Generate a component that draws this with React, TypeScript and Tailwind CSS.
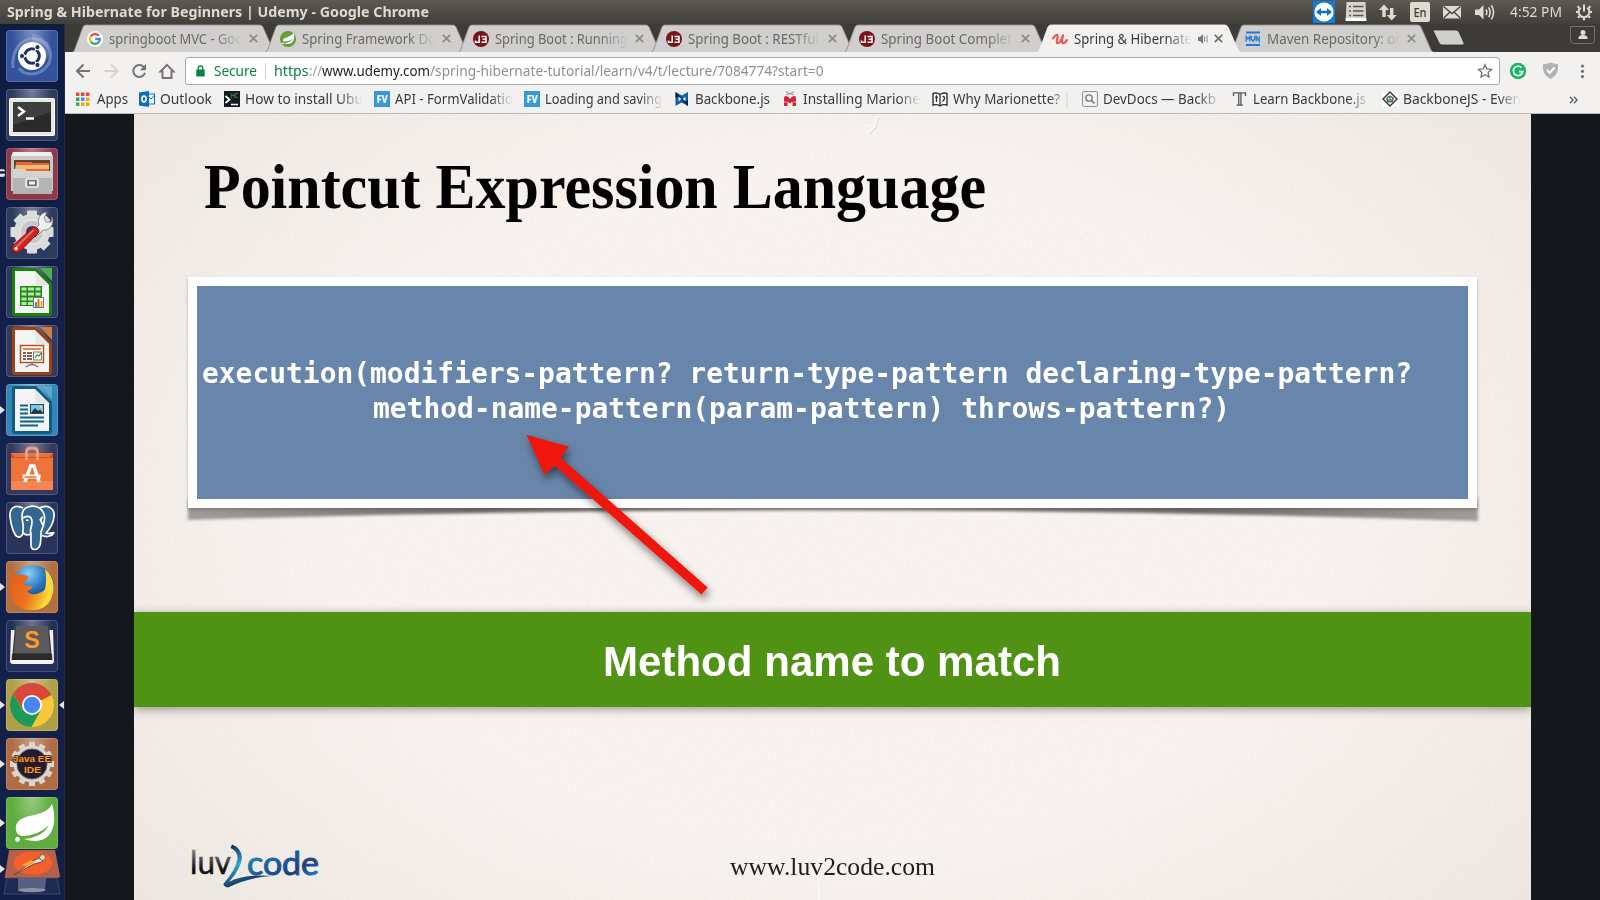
import { useLayoutEffect, useRef } from "react";
import type { ReactNode } from "react";

/* Text squeezed or stretched horizontally to an exact width. */
function Fit({ w, className = "", children }: { w: number; className?: string; children: ReactNode }) {
  const ref = useRef<HTMLSpanElement>(null);
  useLayoutEffect(() => {
    const el = ref.current;
    if (!el) return;
    el.style.transform = "none";
    const natural = el.getBoundingClientRect().width;
    if (natural > 0) el.style.transform = `scaleX(${w / natural})`;
  }, [w]);
  return (
    <span className="block shrink-0" style={{ width: w }}>
      <span ref={ref} className={`inline-block origin-left whitespace-pre align-top ${className}`}>
        {children}
      </span>
    </span>
  );
}

/* ---------- system bar ---------- */

function SystemBar() {
  return (
    <header className="flex h-6 w-full items-center bg-linear-to-b from-[#5d5a50] to-[#403f3a] pl-[7px] text-[#dfdbd2]">
      <div className="-mt-px">
        <Fit w={422} className="text-[14px] leading-[24px] font-bold">
          Spring &amp; Hibernate for Beginners | Udemy - Google Chrome
        </Fit>
      </div>
      <svg className="ml-auto h-6 w-[184px]" viewBox="1312 0 184 24">
        <rect x="1313" y="1" width="22" height="22" fill="#0e7fe0" />
        <circle cx="1324" cy="12" r="9.6" fill="#fff" />
        <path d="M1316 12l5-4v2.8h6V8l5 4-5 4v-2.8h-6V16z" fill="#0e73d0" />
        <path d="M1346.500 2h19l.8 19h-20.6z" fill="#d6d4d0" />
        <path d="M1345.700 18h20.600v3h-20.600z" fill="#fff" />
        <path d="M1349 6.500h2M1353 6.500h10.500M1349 11h2M1353 11h10.500M1349 15.500h2M1353 15.500h10.500" stroke="#55534e" strokeWidth="1.700" />
        <path d="M1384 4.500l5 5.500h-3.300v7h-3.400v-7h-3.300zM1391.700 20.500l5-5.500h-3.300V8h-3.400v7h-3.300z" fill="#dfdbd2" />
        <rect x="1410" y="2" width="20" height="20" rx="2" fill="#dfdbd2" />
        <text x="1413.500" y="17" fontSize="12.500" fontWeight="500" fill="#3c3b37" textLength="13" lengthAdjust="spacingAndGlyphs">En</text>
        <path d="M1443 6h18v12.500h-18z" fill="#dfdbd2" />
        <path d="M1443.500 6.500l8.500 7 8.500-7M1443.500 18.200l6.300-6M1460.500 18.200l-6.300-6" fill="none" stroke="#45443f" strokeWidth="1.400" />
        <path d="M1475 9.500h4l4.500-4.500v14.500l-4.500-4.500h-4z" fill="#dfdbd2" />
        <path d="M1486 9.500q1.600 2.700 0 5.500M1488.600 7.300q3 5 0 9.900M1491.300 5.200q4.600 7 0 14" fill="none" stroke="#dfdbd2" strokeWidth="1.600" />
      </svg>
      <div className="ml-[14px]">
        <Fit w={52} className="text-[14px] leading-[24px]">4:52 PM</Fit>
      </div>
      <svg className="mr-[7px] ml-[13px] h-[18px] w-[18px]" viewBox="0 0 18 18" fill="none" stroke="#dfdbd2">
        <path d="M5.600 4.600a5.400 5.400 0 1 0 6.800 0" strokeWidth="2" />
        <path d="M9 1.500v7" strokeWidth="2" />
        <path d="M4 4.600L2.600 3.200M14 4.600l1.400-1.400M3.200 9H1M17 9h-2.200M4.600 13.200l-1.600 1.600M13.400 13.200l1.600 1.600M9 15v2.300" strokeWidth="2.200" />
      </svg>
    </header>
  );
}

/* ---------- launcher ---------- */

function Dash() {
  return (
    <svg viewBox="0 0 52 52" className="h-[52px] w-[52px]">
      <path d="M7 38C5 20 16 7 30 9c10 2 15 10 14 17M40 12c8 12 5 24-6 30-8 4-17 2-21-4" fill="none" stroke="#a9bbdc" strokeOpacity=".45" strokeWidth="3" />
      <path d="M26 4c14 0 19 14 16 24L26 26z" fill="#fff" opacity=".16" />
      <circle cx="26" cy="26" r="14" fill="#fff" />
      <circle cx="26" cy="26" r="7.300" fill="none" stroke="#20325f" strokeWidth="3" />
      <path d="M26 26L14 26M26 26l6-10.500M26 26l6 10.500" stroke="#fff" strokeWidth="1.300" />
      <circle cx="26" cy="26" r="5.400" fill="#fff" />
      <g fill="#20325f" stroke="#fff" strokeWidth="1">
        <circle cx="16" cy="26" r="2.600" />
        <circle cx="31.500" cy="17.200" r="2.600" />
        <circle cx="31.500" cy="35" r="2.600" />
      </g>
    </svg>
  );
}

function Terminal() {
  return (
    <svg viewBox="0 0 52 52" className="h-[52px] w-[52px]">
      <rect x="3.500" y="9.500" width="45" height="37" rx="1" fill="#e8e8e8" stroke="#fff" />
      <rect x="7" y="13" width="38" height="30" fill="#2a2a2a" />
      <path d="M7 13h38v10L7 36z" fill="#4c4c4c" opacity=".6" />
      <path d="M12 18l6 4.500-6 4.500M20 29.500h8" fill="none" stroke="#fff" strokeWidth="2.400" />
    </svg>
  );
}

function Files() {
  return (
    <svg viewBox="0 0 52 52" className="h-[52px] w-[52px]">
      <path d="M7 4h38l2 5v34H5V9z" fill="#c9c9c9" />
      <path d="M7 4h38l1.500 4h-41z" fill="#ededed" />
      <rect x="8" y="12" width="36" height="12" fill="#5c4430" />
      <path d="M10 14h15l2 1h16v9H9z" fill="#e2692e" />
      <path d="M10 17h33v4H9z" fill="#f4b77a" />
      <path d="M7 21h12l2 2h25v23H7z" fill="#b4b4b4" />
      <path d="M7 21h12l2 2h25v7H7z" fill="#d2d2d2" />
      <rect x="20" y="31" width="12" height="8" rx="1" fill="#8d8d8d" stroke="#eee" strokeWidth="1.700" />
      <rect x="22.500" y="33" width="7" height="4" fill="#f4f4f4" stroke="#555" strokeWidth=".8" />
    </svg>
  );
}

function Settings() {
  return (
    <svg viewBox="0 0 52 52" className="h-[52px] w-[52px]">
      <g fill="#dcdcdc">
        <circle cx="26" cy="25" r="18" />
        {[0, 45, 90, 135].map((a) => (
          <rect key={a} x="21" y="3.500" width="10" height="43" rx="1" transform={`rotate(${a} 26 25)`} />
        ))}
      </g>
      <circle cx="26" cy="25" r="12" fill="#c9c9c9" stroke="#eee" />
      <circle cx="26" cy="25" r="6" fill="#2d3c63" />
      <path d="M28 23l5-5c-2-6 1-12 8-13l-3 6 2 4 5 0 1-5c3 7-2 14-9 13l-5 5z" fill="#efefef" stroke="#777" strokeWidth=".8" />
      <path d="M27.500 20q5 0 5.500 5L14 44.500c-4.500 3.500-10-1.500-7-6z" fill="#cf2320" stroke="#8b0f0d" />
      <path d="M27.500 23L10.500 40" stroke="#ef6a60" strokeWidth="1.800" />
      <circle cx="10" cy="41.500" r="1.700" fill="#fff" />
    </svg>
  );
}

function OfficePage({ dark, fold, children }: { dark: string; fold: string; children: ReactNode }) {
  return (
    <svg viewBox="0 0 52 52" className="h-[52px] w-[52px]">
      <path d="M8 2h22l16 16v29q0 3-3 3H9q-3 0-3-3V4q0-2 2-2z" fill={dark} />
      <path d="M34 2h12v13z" fill={fold} />
      <path d="M9 5h20l14 14v28H9z" fill="#f4f4f4" />
      <path d="M29 5l14 14H30z" fill="#dcdcdc" opacity=".6" />
      {children}
    </svg>
  );
}

function Calc() {
  return (
    <OfficePage dark="#18830c" fold="#4bb544">
      <rect x="14" y="20" width="22" height="20" fill="#1d8a12" />
      <path d="M15.500 21.500h5v3h-5zM22 21.500h6v3h-6zM29.500 21.500h5v3h-5zM15.500 26.500h5v3h-5zM22 26.500h6v3h-6zM29.500 26.500h5v3h-5zM15.500 31.500h5v3h-5zM22 31.500h6v3h-6zM15.500 36h5v3h-5zM22 36h6v3h-6z" fill="#b5e8a8" />
      <rect x="27.500" y="31.500" width="10" height="10" fill="#fff" stroke="#777" />
      <path d="M29 36h2v5h-2z" fill="#4a90c8" />
      <path d="M31.500 33h2v8h-2z" fill="#e06a1c" />
      <path d="M34.500 35h2v6h-2z" fill="#f0b400" />
    </OfficePage>
  );
}

function Impress() {
  return (
    <OfficePage dark="#9a4216" fold="#d17a48">
      <rect x="14.500" y="20.500" width="23" height="17" fill="#fff" stroke="#b5511c" strokeWidth="1.500" />
      <path d="M17 24h18" stroke="#e08a4a" strokeWidth="2" />
      <path d="M17 28h3M17 31h3M17 34h3M21 28h5M21 31h5M21 34h5" stroke="#6b2a10" strokeWidth="1.700" />
      <rect x="27.500" y="27" width="8" height="8" fill="#fff" stroke="#777" />
      <path d="M29 33l2-3 2 1 2-3" fill="none" stroke="#1c9a2a" strokeWidth="1.300" />
      <path d="M26 38v2M20 42q6-5 12 0" fill="none" stroke="#777" strokeWidth="1.500" />
    </OfficePage>
  );
}

function Writer() {
  return (
    <OfficePage dark="#0d5b87" fold="#5aa7cf">
      <path d="M14 21.500h8M14 25.500h8M14 29.500h8M14 33.500h24M14 37.500h24M14 41.500h18" stroke="#0f5f8f" strokeWidth="1.900" />
      <rect x="24.500" y="20.500" width="13" height="9" fill="#7cc3ea" stroke="#174c6c" />
      <path d="M25 29l4-5 3 3 2-1.500 3 3.500z" fill="#333" />
      <circle cx="35" cy="23" r="1.200" fill="#ffd633" />
    </OfficePage>
  );
}

function Software() {
  return (
    <svg viewBox="0 0 52 52" className="h-[52px] w-[52px]">
      <path d="M5 10h42v37H5z" fill="#f0743a" />
      <path d="M5 10l4 4h34l4-4v5H5z" fill="#c9501f" />
      <path d="M5 38h42v9H5z" fill="#f4864f" />
      <path d="M20.500 17V9q0-4 5.500-4t5.500 4v8" fill="none" stroke="#f2a083" strokeWidth="2.800" />
      <path d="M19 39l5.500-16h3.500L33 39" fill="none" stroke="#fff" strokeWidth="3.400" />
      <path d="M16.500 33.500h18" stroke="#fff" strokeWidth="4" />
      <path d="M18.500 34h12" stroke="#e96a30" strokeWidth="1.400" />
    </svg>
  );
}

function Postgres() {
  return (
    <svg viewBox="0 0 52 52" className="h-[52px] w-[52px]" stroke="#fff" strokeWidth="1.700" strokeLinejoin="round" fill="#336791">
      <path d="M17 6C9 2 3 6 4 15c1 8 4 19 8 20 3 1 5-3 6-6" />
      <path d="M33 6c9-4 16 0 15 9-1 7-5 13-8 16 3 1 6 0 8-.5-2 4-8 5-12 3" />
      <path d="M22 5c5-2 13-1 16 7 2 6-1 13-3 18 0 6 0 10-1 13-2 6-9 6-9 0V32c-5 2-9 0-8-4 1-5-1-9-1-13 0-6 2-9 6-10z" />
      <path d="M17 16c4-3 9-2 9 4s-3 7-1 12M37 15c-4 1-2 6 1 9" fill="none" />
      <path d="M20 18l2.500.5M33.500 18l2-.5" />
    </svg>
  );
}

function Firefox() {
  return (
    <svg viewBox="0 0 52 52" className="h-[52px] w-[52px]">
      <defs>
        <radialGradient id="ffglobe" cx=".4" cy=".2" r=".8"><stop offset="0" stopColor="#8ad4f5" /><stop offset=".5" stopColor="#2470b8" /><stop offset="1" stopColor="#0b2a66" /></radialGradient>
        <linearGradient id="fffox" x1="0" y1="0" x2="1" y2=".4"><stop offset="0" stopColor="#e05a18" /><stop offset=".6" stopColor="#ee7420" /><stop offset="1" stopColor="#f8d030" /></linearGradient>
      </defs>
      <circle cx="27" cy="25" r="21" fill="url(#ffglobe)" />
      <path d="M9 9c0 4 2 6 6 5 4-1 5 1 8 2l-5 6c0 3 4 3 7 3 3 1 0 4-4 5 3 4 8 4 12 2 7-2 9-7 9-13 3 5 4 14 3 19-3 7-10 11-18 11C11 50 3 38 4 26c0-7 2-12 5-17z" fill="url(#fffox)" />
      <path d="M39 8c10 8 11 22 5 31-3 5-7 8-12 9 7-6 10-12 9-18l-4 6c3-9 4-18 2-28z" fill="#fbd93c" />
    </svg>
  );
}

function Sublime() {
  return (
    <svg viewBox="0 0 52 52" className="h-[52px] w-[52px]">
      <path d="M5 10h42l1 31q0 3-3 3H7q-3 0-3-3z" fill="#f3f3f3" />
      <path d="M9 6h34l3 33H6z" fill="#3b3b3b" />
      <path d="M10 6h32l2 27H8z" fill="#5b5b5b" />
      <path d="M6 34h40l.4 6H5.600z" fill="#2b2b2b" />
      <text x="26" y="28" textAnchor="middle" fontSize="23" fontWeight="700" fill="#ff9a2e" className="font-['Liberation_Sans']">S</text>
    </svg>
  );
}

function Chrome() {
  return (
    <svg viewBox="0 0 52 52" className="h-[52px] w-[52px]">
      <circle cx="26" cy="26" r="22" fill="#f9c83a" />
      <path d="M26 26L6.900 15.100A22 22 0 0 1 45.600 16z" fill="#d9473a" />
      <path d="M26 16h19.600A22 22 0 0 0 6.900 15.100L16.500 30z" fill="#d9473a" />
      <path d="M6.900 15.100A22 22 0 0 0 25.500 48l9.200-16.500L17 31z" fill="#1d9a57" />
      <circle cx="26" cy="26" r="10" fill="#fff" />
      <circle cx="26" cy="26" r="8.200" fill="#4487f0" />
    </svg>
  );
}

function Eclipse() {
  return (
    <svg viewBox="0 0 52 52" className="h-[52px] w-[52px]">
      <g fill="#d9d5d0">
        {[0, 30, 60, 90, 120, 150].map((a) => (
          <rect key={a} x="23" y="4" width="6" height="44" transform={`rotate(${a} 26 26)`} />
        ))}
        <circle cx="26" cy="26" r="18.500" />
      </g>
      <circle cx="26" cy="26" r="15" fill="#221c33" stroke="#555" />
      <g fill="#f19a35" stroke="#3a1c06" strokeWidth="1.600" paintOrder="stroke" fontSize="9" fontWeight="700" textAnchor="middle" className="font-['Liberation_Sans']">
        <text x="26" y="23.500" textLength="38" lengthAdjust="spacingAndGlyphs">Java EE</text>
        <text x="26.500" y="34.500" textLength="17" lengthAdjust="spacingAndGlyphs">IDE</text>
      </g>
    </svg>
  );
}

function Spring() {
  return (
    <svg viewBox="0 0 52 52" className="h-[52px] w-[52px]">
      <path d="M46 7c5 15 3 36-16 37-5 0-9-1-12-2 12-1 21-6 25-14-7 7-17 11-27 11-5-1-7-5-6-10 3-14 29-7 36-22z" fill="#fff" />
      <circle cx="11.500" cy="42.500" r="2.400" fill="#fff" />
    </svg>
  );
}

const launcher: { bg: string; icon: ReactNode; left?: number; right?: boolean }[] = [
  { bg: "bg-[#34539d]", icon: <Dash /> },
  { bg: "bg-[#2c3a5f]", icon: <Terminal /> },
  { bg: "bg-[#8c3a48]", icon: <Files />, left: 2 },
  { bg: "bg-[#2c3a5f]", icon: <Settings /> },
  { bg: "bg-[#2c3a5f]", icon: <Calc /> },
  { bg: "bg-[#333a5c]", icon: <Impress /> },
  { bg: "bg-[#3487b4]", icon: <Writer />, left: 1 },
  { bg: "bg-[#34395d]", icon: <Software /> },
  { bg: "bg-[#2a345a]", icon: <Postgres /> },
  { bg: "bg-[#b3703f]", icon: <Firefox />, left: 1 },
  { bg: "bg-[#232f59]", icon: <Sublime /> },
  { bg: "bg-[#ada046]", icon: <Chrome />, left: 1, right: true },
  { bg: "bg-[#b06c42]", icon: <Eclipse />, left: 1 },
  { bg: "bg-[#5fad3e]", icon: <Spring />, left: 1 },
];

function Launcher() {
  return (
    <aside className="flex w-[65px] shrink-0 flex-col gap-[7px] border-r border-[#2b2d33] bg-linear-to-b from-[#0e1c40] via-[#14224e] to-[#141f45] pt-[6px]">
      {launcher.map((item, i) => (
        <div key={i} className="relative flex h-[52px] shrink-0 pl-[6px]">
          <div className={`relative h-[52px] w-[52px] overflow-hidden rounded-[4px] shadow-[inset_0_0_0_1px_rgba(255,255,255,0.16)] ${item.bg}`}>
            <div className="absolute inset-0 bg-radial-[at_50%_0%] from-white/35 to-transparent to-55%" />
            <div className="relative">{item.icon}</div>
          </div>
          {item.left === 1 && <svg className="absolute top-[21px] left-0 h-[10px] w-[5px]" viewBox="0 0 5 10"><path d="M0 1l5 4-5 4z" fill="#e4e4e4" /></svg>}
          {item.left === 2 && <svg className="absolute top-[20px] left-0 h-[10px] w-[5px]" viewBox="0 0 5 10"><path d="M0 1.500h4l1 1.500H0zM0 6h5l-1 2.500H0z" fill="#e4e4e4" stroke="#e4e4e4" strokeWidth=".6" /></svg>}
          {item.right && <svg className="absolute top-[21px] right-0 h-[10px] w-[5px]" viewBox="0 0 5 10"><path d="M5 1L0 5l5 4z" fill="#e4e4e4" /></svg>}
        </div>
      ))}
      <svg viewBox="0 0 64 48" className="-mt-[6px] h-[48px] w-[64px] shrink-0">
        <path d="M0 15l5 4-5 4z" fill="#e4e4e4" />
        <path d="M9 0h46l5 26q0 2-2 2H6q-2 0-1-2z" fill="#b5604a" />
        <ellipse cx="33" cy="13" rx="19.500" ry="11.500" fill="#f4602a" />
        <path d="M14 25L33 11l8-4 4-1-3 6-8 2z" fill="#e8e2da" stroke="#6a4a3a" strokeWidth="1" />
        <circle cx="42.500" cy="7.500" r="3" fill="#d9d3cc" stroke="#6a4a3a" strokeWidth=".8" />
        <path d="M22 15l9-5 4 2-8 5z" fill="#f6a13a" />
        <path d="M7 28h50l3 16H4z" fill="#1e2a50" stroke="#40507a" strokeWidth=".8" />
        <path d="M18 28h28l-1 13q-13 3-27 0z" fill="#56617f" />
        <ellipse cx="32" cy="40" rx="13.500" ry="2" fill="#8b93a8" />
      </svg>
    </aside>
  );
}

/* ---------- tabs ---------- */

function FavJB() {
  return (
    <svg viewBox="0 0 16 16" className="h-4 w-4">
      <circle cx="8" cy="8" r="8" fill="#7b1215" />
      <path d="M2.500 9.500v1.800H6.200V4.500M8.500 5.400h4.500v5.900H8.500M9.500 8.300h3.500" fill="none" stroke="#fff" strokeWidth="1.500" />
    </svg>
  );
}

const favGoogle = (
  <svg viewBox="0 0 16 16" className="h-4 w-4">
    <circle cx="8" cy="8" r="8" fill="#fff" />
    <g fill="none" strokeWidth="2.300">
      <path d="M11.700 4.700A5 5 0 0 0 3.700 5.500" stroke="#ea4335" />
      <path d="M3.700 5.500a5 5 0 0 0 0 5" stroke="#fbbc05" />
      <path d="M3.700 10.500a5 5 0 0 0 7.800 1" stroke="#34a853" />
      <path d="M11.500 11.500A5 5 0 0 0 12.900 8H8.200" stroke="#4285f4" />
    </g>
  </svg>
);
const favSpring = (
  <svg viewBox="0 0 16 16" className="h-4 w-4">
    <circle cx="8" cy="8" r="8" fill="#5fa134" />
    <path d="M13.500 1.500c1.500 5 .5 11-5 11.500-2 0-3.500-.4-4.500-.8 4-.5 7.500-2 9-5-2.500 2.300-6 3.600-9.500 3.300C1 6 11 7 13.500 1.500z" fill="#fff" />
    <circle cx="3" cy="12.500" r=".9" fill="#fff" />
  </svg>
);
const favUdemy = (
  <svg viewBox="0 0 16 16" className="h-4 w-4">
    <path d="M1 7.500c1.500-2 3.300-4 4.300-3.700C6.800 4.300 3 12.300 5.800 12.300 8.500 12.300 10.300 6.500 11.300 3.500 10.300 7.500 9 12.300 11.200 12.300c1.400 0 2.700-1.500 3.700-3.300" fill="none" stroke="#ec5252" strokeWidth="2.100" strokeLinecap="round" />
  </svg>
);
const favMaven = (
  <svg viewBox="0 0 16 16" className="h-4 w-4">
    <path d="M1 1.500h14M1 14h14" stroke="#2179d8" strokeWidth="1.800" />
    <path d="M1.200 10.500V5.500L3 8l1.800-2.500v5M6.400 5v3L8 10.300 9.600 8V5M11.200 10.500V5.500l3 4.700V5" fill="none" stroke="#2179d8" strokeWidth="1.300" />
  </svg>
);

const tabs: { icon: ReactNode; title: string; w: number; active?: boolean }[] = [
  { icon: favGoogle, title: "springboot MVC - Goo", w: 134 },
  { icon: favSpring, title: "Spring Framework Do", w: 134 },
  { icon: <FavJB />, title: "Spring Boot : Running", w: 133 },
  { icon: <FavJB />, title: "Spring Boot : RESTful", w: 131 },
  { icon: <FavJB />, title: "Spring Boot Complet", w: 131 },
  { icon: favUdemy, title: "Spring & Hibernate", w: 118, active: true },
  { icon: favMaven, title: "Maven Repository: or", w: 134 },
];

function TabStrip() {
  return (
    <div className="flex h-7 items-center bg-[#3c3b37] pl-[6px]">
      {tabs.map((t, i) => (
        <div key={i} className={`relative flex h-7 w-[193px] shrink-0 items-center pt-px pl-[16px] ${t.active ? "z-20" : "z-0"}`}>
          <svg className="absolute top-0 left-0 h-[29px] w-[206px]" viewBox="0 0 206 29">
            <path
              d="M1 28.500Q2.500 28 3.500 26L12 3q.8-2 3-2H189q2 0 3 2l10 23q1 2 3 2.500z"
              fill={t.active ? "#f2f1f0" : "#d0cfce"}
              stroke={t.active ? "#f2f1f0" : "#94928f"}
              strokeWidth=".9"
            />
            {!t.active && <path d="M0 28.500h206" stroke="#9d9b98" />}
            {t.active && <path d="M0 28h206v1H0z" fill="#f2f1f0" />}
          </svg>
          <div className="relative flex items-center">
            {t.icon}
            <div className={`ml-[6px] h-6 overflow-hidden ${t.active ? "w-[120px]" : "w-[136px]"} [mask-image:linear-gradient(to_right,#000_78%,transparent_98%)]`}>
              <Fit w={t.w} className={`text-[14px] leading-[24px] ${t.active ? "text-[#3a3a3a]" : "text-[#6a6967]"}`}>{t.title}</Fit>
            </div>
            {t.active && (
              <svg className="ml-[4px] h-[10px] w-[10px]" viewBox="0 0 10 10">
                <path d="M0 3h2l3-3v10L2 7H0z" fill="#777" />
                <path d="M6.500 2.500v5M9 1.500v7" stroke="#888" />
              </svg>
            )}
            <svg className={`${t.active ? "ml-[6px]" : "ml-[4px]"} h-[9px] w-[9px]`} viewBox="0 0 9 9">
              <path d="M.8.8l7.400 7.400M8.200.8L.8 8.200" stroke={t.active ? "#6f6e6c" : "#8b8a88"} strokeWidth="1.700" />
            </svg>
          </div>
        </div>
      ))}
      <svg className="ml-[10px] h-[18px] w-[36px]" viewBox="0 0 36 18">
        <path d="M2 1h22q2 0 3 2l5 11q.5 2-1.500 2H10q-2 0-3-2L1.500 2.500Q1 1 2 1z" fill="#d0cfce" stroke="#2e2d2a" strokeWidth=".8" />
      </svg>
      <div className="mt-[-6px] mr-[5px] ml-auto flex h-[18px] w-[25px] items-center justify-center rounded-b-[4px] border border-[#74726d] bg-[#3c3b37]">
        <svg className="h-[10px] w-[10px]" viewBox="0 0 10 10" fill="#dfdbd2"><circle cx="5" cy="2.600" r="2.500" /><path d="M.5 9V7q1-2 4.500-2t4.500 2v2z" /></svg>
      </div>
    </div>
  );
}

/* ---------- toolbar ---------- */

function Toolbar() {
  return (
    <div className="relative z-10 flex h-[33px] items-center bg-[#f2f1f0] pt-[4px] pr-[10px] pl-[10px]">
      <svg className="h-[18px] w-[104px]" viewBox="75 62 104 18" fill="none" strokeWidth="2">
        <path d="M90 71H77.500M83.500 64.500L77 71l6.500 6.500" stroke="#757473" />
        <path d="M104.500 71H117M111 64.500l6.500 6.500-6.500 6.500" stroke="#d3d2d0" />
        <path d="M144.200 67.500A6 6 0 1 0 145 72.800" stroke="#757473" />
        <path d="M146 64v6.200h-6.200z" fill="#757473" />
        <path d="M160.500 71.500L167 64.800l6.500 6.700h-2v6.500h-9v-6.500z" stroke="#757473" strokeWidth="1.900" />
      </svg>
      <div className="ml-[6px] flex h-[28px] w-[1315px] shrink-0 items-center rounded-[3px] border border-[#a9a8a6] bg-white pl-[10px]">
        <svg className="h-[12px] w-[9px]" viewBox="0 0 9 12"><path d="M.3 4.500h8.400V11.500H.3z" fill="#0b8043" /><path d="M2.200 5V3q0-2 2.300-2t2.300 2v2" fill="none" stroke="#0b8043" strokeWidth="1.300" /></svg>
        <div className="ml-[9px] flex text-[14px] leading-[24px]">
          <Fit w={43} className="text-[#0b8043]">Secure</Fit>
          <span className="mt-[4px] ml-[8px] h-[16px] w-px bg-[#cfcfcf]" />
          <span className="w-[8px]" />
          <Fit w={34.5} className="text-[#0b8043]">https</Fit>
          <Fit w={13} className="text-[#9a9a9a]">://</Fit>
          <Fit w={108} className="text-[#1d1d1d]">www.udemy.com</Fit>
          <Fit w={393.500} className="text-[#8f8f8f]">/spring-hibernate-tutorial/learn/v4/t/lecture/7084774?start=0</Fit>
        </div>
        <svg className="mr-[6px] ml-auto h-[16px] w-[16px]" viewBox="0 0 16 16"><path d="M8 1.700l1.900 4.200 4.600.5-3.400 3.100.9 4.500-4-2.300-4 2.300.9-4.500L1.500 6.400l4.600-.5z" fill="none" stroke="#6f6f6f" strokeWidth="1.300" /></svg>
      </div>
      <svg className="ml-[9px] h-[18px] w-[80px]" viewBox="1509 62 80 18">
        <circle cx="1518" cy="71" r="8.200" fill="#18b566" />
        <path d="M1521.500 67.700a4.700 4.700 0 1 0 1.200 4h-3.700" fill="none" stroke="#fff" strokeWidth="1.700" />
        <path d="M1550.500 62.500q4 1.500 7.500 1.500v5q-.5 6-7.500 10-7-4-7.500-10v-5q3.500 0 7.500-1.500z" fill="#b4b3b2" />
        <path d="M1547 70l2.800 2.800 4.700-5.300" fill="none" stroke="#fff" strokeWidth="1.900" />
        <g fill="#6f6f6f"><circle cx="1582.500" cy="66" r="1.600" /><circle cx="1582.500" cy="71.300" r="1.600" /><circle cx="1582.500" cy="76.600" r="1.600" /></g>
      </svg>
    </div>
  );
}

/* ---------- bookmarks ---------- */

const icoFV = (
  <svg viewBox="0 0 16 16" className="h-4 w-4">
    <rect width="16" height="16" fill="#3498db" />
    <text x="2.500" y="12" fontSize="10" fontWeight="800" fill="#fff" textLength="11" lengthAdjust="spacingAndGlyphs">FV</text>
  </svg>
);

const bookmarks: { cell: string; icon: ReactNode; text: string; w: number; fade?: boolean }[] = [
  {
    cell: "w-[63px]",
    icon: (
      <svg viewBox="0 0 16 16" className="h-4 w-4">
        <path d="M0 1.500h3.400v3.400H0zM5 1.500h3.400v3.400H5zM10 1.500h3.400v3.400H10z" fill="#ea4335" />
        <path d="M0 6.500h3.400v3.400H0z" fill="#34a05a" /><path d="M5 6.500h3.400v3.400H5z" fill="#4285f4" /><path d="M10 6.500h3.400v3.400H10z" fill="#f5a700" />
        <path d="M0 11.500h3.400v3.400H0z" fill="#34a05a" /><path d="M5 11.500h3.400v3.400H5zM10 11.500h3.400v3.400H10z" fill="#f5a700" />
      </svg>
    ),
    text: "Apps", w: 31,
  },
  {
    cell: "w-[85px]",
    icon: (
      <svg viewBox="0 0 16 16" className="h-4 w-4">
        <path d="M0 1.500L10 0v16L0 14.500z" fill="#0a6fc2" />
        <path d="M10 3h5.500v10H10" fill="#fff" stroke="#0a6fc2" strokeWidth="1.200" /><path d="M10 6l2 2 3.500-4" fill="none" stroke="#0a6fc2" />
        <ellipse cx="5" cy="8" rx="2.100" ry="2.900" fill="none" stroke="#fff" strokeWidth="1.600" />
      </svg>
    ),
    text: "Outlook", w: 52,
  },
  {
    cell: "w-[150px]",
    icon: (
      <svg viewBox="0 0 16 16" className="h-4 w-4">
        <rect width="16" height="16" fill="#141a1f" />
        <path d="M1.500 5l4 3.500-4 3.500M7 13.500h7" fill="none" stroke="#fff" strokeWidth="1.700" />
        <text x="6.500" y="6.500" fontSize="6.500" fill="#3fc05a" textLength="8" lengthAdjust="spacingAndGlyphs">HC</text>
      </svg>
    ),
    text: "How to install Ubu", w: 118, fade: true,
  },
  { cell: "w-[150px]", icon: icoFV, text: "API - FormValidatio", w: 118, fade: true },
  { cell: "w-[150px]", icon: icoFV, text: "Loading and saving", w: 117, fade: true },
  {
    cell: "w-[108px]",
    icon: (
      <svg viewBox="0 0 16 16" className="h-4 w-4">
        <path d="M1.500 1v14l6-3.500 6.500 3.500V1L8 4.500z" fill="#0b5fae" />
        <path d="M1.500 1v6l3-1.500L14 15V9l-3 1.500z" fill="#0c2036" />
        <path d="M4.500 5.800L7.500 8l-3 2.200zM11.500 5.800L8.500 8l3 2.200z" fill="#f2f1f0" />
      </svg>
    ),
    text: "Backbone.js", w: 75,
  },
  {
    cell: "w-[150px]",
    icon: (
      <svg viewBox="0 0 16 16" className="h-4 w-4">
        <path d="M4 .8l4 2 4-2M4 4l4-1.500L12 4" fill="none" stroke="#999" strokeWidth="1.200" />
        <path d="M2 15V7q0-2 2-2 2 0 4 3 2-3 4-3t2 2v8h-3.500v-4.500L8 12.500l-2.500-2V15z" fill="#cf2432" />
        <path d="M2 11h2.500M11.500 11H14" stroke="#f2f1f0" strokeWidth=".7" />
      </svg>
    ),
    text: "Installing Marione", w: 117, fade: true,
  },
  {
    cell: "w-[150px]",
    icon: (
      <svg viewBox="0 0 16 16" className="h-4 w-4">
        <path d="M1 2.500q4-1.200 7 1 3-2.200 7-1V14q-4-1-7 .8Q5 13 1 14z" fill="#f7f7f7" stroke="#333" strokeWidth="1.400" />
        <path d="M8 3.500V15M4.500 5v6M3.500 7l1-2 1 2M10.500 5.500q2.500 0 2 2t-2 3" fill="none" stroke="#333" strokeWidth="1.300" />
      </svg>
    ),
    text: "Why Marionette? |", w: 118, fade: true,
  },
  {
    cell: "w-[150px]",
    icon: (
      <svg viewBox="0 0 16 16" className="h-4 w-4">
        <rect x=".6" y=".6" width="14.800" height="14.800" rx="1" fill="#f4f3f2" stroke="#8b8a88" />
        <circle cx="7" cy="7" r="3.200" fill="none" stroke="#777" strokeWidth="1.300" /><path d="M9.300 9.300l3.200 3.200" stroke="#777" strokeWidth="1.700" />
      </svg>
    ),
    text: "DevDocs — Backb", w: 113, fade: true,
  },
  {
    cell: "w-[150px]",
    icon: (
      <svg viewBox="0 0 16 16" className="h-4 w-4">
        <path d="M1.500 5V1.800h12V5M6.700 2v12M8.900 2v12M4.500 14.200h6.500" fill="none" stroke="#555" strokeWidth="1.300" />
      </svg>
    ),
    text: "Learn Backbone.js", w: 113, fade: true,
  },
  {
    cell: "w-[150px]",
    icon: (
      <svg viewBox="0 0 16 16" className="h-4 w-4">
        <rect width="16" height="16" fill="#fbfbfb" />
        <path d="M8 1l7 7-7 7-7-7z" fill="none" stroke="#333" strokeWidth="1.400" />
        <path d="M4.500 7q3.500-4 7 0l-1 4h-5z" fill="#5f9a72" stroke="#333" strokeWidth=".7" />
        <circle cx="6.700" cy="7.500" r=".7" fill="#fff" /><circle cx="9.300" cy="7.500" r=".7" fill="#fff" />
      </svg>
    ),
    text: "BackboneJS - Even", w: 118, fade: true,
  },
];

function BookmarkBar() {
  return (
    <div className="flex h-[29px] items-center border-b border-[#bab8b5] bg-[#f2f1f0] pl-[11px] text-[#3b3b3b]">
      {bookmarks.map((b, i) => (
        <div key={i} className={`flex shrink-0 items-center ${b.cell}`}>
          {b.icon}
          <div className={`ml-[5px] h-6 overflow-hidden ${b.fade ? "w-[119px] [mask-image:linear-gradient(to_right,#000_80%,transparent_99%)]" : ""}`}>
            <Fit w={b.w} className="text-[14px] leading-[24px]">{b.text}</Fit>
          </div>
        </div>
      ))}
      <svg className="mt-px ml-[37px] h-[8px] w-[9px]" viewBox="0 0 9 8"><path d="M1 .8L4 4 1 7.200M5 .8L8 4 5 7.200" fill="none" stroke="#666" strokeWidth="1.500" /></svg>
    </div>
  );
}

/* ---------- slide ---------- */

function Luv2Code() {
  return (
    <svg className="h-[50px] w-[134px]" viewBox="188 840 134 50">
      <defs>
        <linearGradient id="luv" x1="0" y1="0" x2="0" y2="1"><stop offset=".2" stopColor="#8a8a8a" /><stop offset=".7" stopColor="#111" /></linearGradient>
        <linearGradient id="code" x1="0" y1="0" x2="1" y2="1"><stop offset="0" stopColor="#2aa4cf" /><stop offset=".45" stopColor="#1b5fa0" /><stop offset=".7" stopColor="#1c3e80" /><stop offset="1" stopColor="#2397cf" /></linearGradient>
        <linearGradient id="two" x1="0" y1="0" x2=".4" y2="1"><stop offset="0" stopColor="#0d1638" /><stop offset=".5" stopColor="#2aa9cf" /><stop offset="1" stopColor="#10204c" /></linearGradient>
      </defs>
      <text x="190" y="874" fontSize="33" className="font-[Lato]" fill="url(#luv)" stroke="url(#luv)" strokeWidth=".5" textLength="41" lengthAdjust="spacingAndGlyphs">luv</text>
      <text x="247" y="874.500" fontSize="33" className="font-[Lato]" fill="url(#code)" stroke="url(#code)" strokeWidth="1" textLength="72" lengthAdjust="spacingAndGlyphs">code</text>
      <path d="M232 844.500q9 3 10 13-1 11-13 24.500 12-8 43-6-23 1-44 11.500-6-1-4-4.500 11-12 13.500-24 .5-8-7-11z" fill="url(#two)" />
    </svg>
  );
}

function Slide() {
  return (
    <main className="relative flex w-[1397px] shrink-0 flex-col overflow-hidden bg-[#f7f2ee]">
      <div className="absolute inset-0 bg-radial-[ellipse_70%_85%_at_50%_50%] from-[#f9f4f1] from-50% to-[#ebe6e0]" />
      <svg className="absolute inset-0 h-full w-full opacity-15">
        <filter id="paper"><feTurbulence type="fractalNoise" baseFrequency=".3" numOctaves="3" /><feColorMatrix values="0 0 0 0 .6 0 0 0 0 .5 0 0 0 0 .42 .7 0 0 0 -.15" /></filter>
        <rect width="100%" height="100%" filter="url(#paper)" />
      </svg>
      <svg className="absolute inset-0 h-full w-full opacity-40" viewBox="0 0 1397 786">
        <path d="M744 2l-3 10-9 8M741 10l-10 2M1050 756" stroke="#fff" strokeWidth="2" fill="none" />
        <path d="M745 4l-3 10-7 7" stroke="#b9b1a8" strokeWidth="1" fill="none" />
        <path d="M686 740l-2 18 1 28" stroke="#fff" strokeWidth="2" fill="none" />
      </svg>

      <h1 className="relative mt-[37px] ml-[70px] h-[72px] font-['Liberation_Serif']">
        <Fit w={782} className="text-[64px] leading-[72px] font-bold text-black">Pointcut Expression Language</Fit>
      </h1>

      <section className="relative mt-[54px] ml-[54px] h-[231px] w-[1289px]">
        <svg className="absolute top-[219px] -left-2 h-[40px] w-[1305px]" viewBox="0 0 1305 40">
          <defs>
            <filter id="soft"><feGaussianBlur stdDeviation="1.800" /></filter>
            <linearGradient id="curl"><stop offset="0" stopColor="#8a8784" stopOpacity=".8" /><stop offset=".22" stopColor="#6c6a67" /><stop offset=".5" stopColor="#8c8a87" /><stop offset=".78" stopColor="#6c6a67" /><stop offset="1" stopColor="#8a8784" stopOpacity=".8" /></linearGradient>
          </defs>
          <path d="M8 2h1290v23Q652 4 8 24z" fill="url(#curl)" filter="url(#soft)" />
        </svg>
        <div className="relative flex h-full w-full flex-col border-[9px] border-white bg-[#6886ab] pt-[70px] pl-[5px] font-['DejaVu_Sans_Mono'] text-[28px] leading-[35px] font-bold text-white shadow-[0_2px_3px_rgba(80,70,60,0.35)]">
          <Fit w={1210}>execution(modifiers-pattern? return-type-pattern declaring-type-pattern?</Fit>
          <div className="pl-[171px]">
            <Fit w={857}>method-name-pattern(param-pattern) throws-pattern?)</Fit>
          </div>
        </div>
      </section>

      <section className="relative mt-[104px] flex h-[95px] shrink-0 items-center bg-[#509213] pl-[469px] font-['Liberation_Sans'] shadow-[0_2px_9px_rgba(60,50,50,0.5)]">
        <Fit w={458} className="mt-[2px] text-[43px] leading-[50px] font-bold text-white">Method name to match</Fit>
      </section>

      <footer className="relative mt-[133px] flex shrink-0">
        <div className="ml-[54px]"><Luv2Code /></div>
        <div className="mt-[11px] ml-[408px] font-['Liberation_Serif']">
          <Fit w={205} className="text-[25px] leading-[32px] text-[#1f1e1c]">www.luv2code.com</Fit>
        </div>
      </footer>

      <svg className="absolute top-[310px] left-[380px] h-[180px] w-[210px]" viewBox="514 424 210 180">
        <filter id="drop" x="-20%" y="-20%" width="140%" height="140%"><feDropShadow dx="2" dy="5" stdDeviation="4" floodColor="#000" floodOpacity=".5" /></filter>
        <path d="M526.500 434.700L569 446.700 560.500 457.500 707.700 587.500 701.500 594.500 554.500 465.500 544.500 475z" fill="#ef1508" filter="url(#drop)" />
      </svg>
    </main>
  );
}

export default function App() {
  return (
    <div className="flex h-[900px] w-[1600px] flex-col overflow-hidden bg-[#14181d] font-['Noto_Sans',sans-serif]">
      <SystemBar />
      <div className="flex min-h-0 flex-1">
        <Launcher />
        <div className="flex min-w-0 flex-1 flex-col">
          <TabStrip />
          <Toolbar />
          <BookmarkBar />
          <div className="flex min-h-0 flex-1 bg-[#14181d] pl-[69px]">
            <Slide />
          </div>
        </div>
      </div>
    </div>
  );
}
